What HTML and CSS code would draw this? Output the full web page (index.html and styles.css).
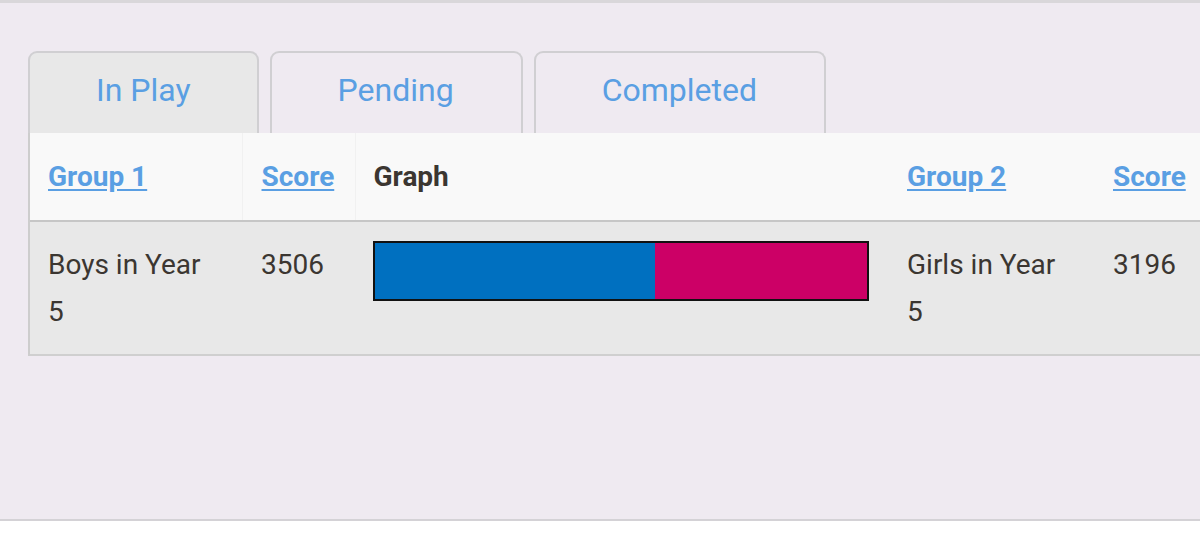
FILE: index.html
```html
<!DOCTYPE html>
<html>
<head>
<meta charset="utf-8">
<link rel="stylesheet" href="styles.css">
</head>
<body>
<div class="page">
  <div class="content">
    <div class="tabs">
      <div class="tab active">In Play</div>
      <div class="tab">Pending</div>
      <div class="tab">Completed</div>
    </div>
    <div class="table-wrap">
      <table class="scores">
        <colgroup>
          <col class="c1"><col class="c2"><col class="c3"><col class="c4"><col class="c5">
        </colgroup>
        <thead>
          <tr>
            <th class="sep"><a href="#">Group 1</a></th>
            <th class="sep"><a href="#">Score</a></th>
            <th class="graph">Graph</th>
            <th><a href="#">Group 2</a></th>
            <th><a href="#">Score</a></th>
          </tr>
        </thead>
        <tbody>
          <tr>
            <td>Boys in Year 5</td>
            <td>3506</td>
            <td class="graph"><div class="bar"><div class="bar-a" style="width:57%"></div><div class="bar-b"></div></div></td>
            <td>Girls in Year 5</td>
            <td>3196</td>
          </tr>
        </tbody>
      </table>
    </div>
  </div>
</div>
</body>
</html>
```
FILE: styles.css
```css
html, body {
  margin: 0;
  padding: 0;
  background: #ffffff;
}
body {
  font-family: Roboto, "Liberation Sans", sans-serif;
  width: 1200px;
  height: 541px;
  overflow: hidden;
}
.page {
  height: 516px;
  background: #efeaf1;
  border-top: 3px solid #d9d7da;
  border-bottom: 2px solid #d4d2d6;
  overflow: hidden;
}
.content {
  padding: 48px 0 0 28px;
}
.tabs {
  display: flex;
  gap: 11px;
  align-items: flex-end;
}
.tab {
  height: 82px;
  box-sizing: border-box;
  padding: 0 67px 6px 66px;
  display: flex;
  align-items: center;
  font-size: 32px;
  color: #5a9fe3;
  border: 2px solid #d0cfd2;
  border-bottom: none;
  border-radius: 9px 9px 0 0;
  background: #efeaf1;
}
.tab.active {
  background: #e8e8e8;
  padding-right: 66px;
}
.table-wrap {
  overflow: hidden;
}
.scores {
  border-collapse: collapse;
  table-layout: fixed;
  width: 1210px;
  font-size: 28px;
  line-height: 47px;
  color: #3b3631;
}
.c1 { width: 213px; }
.c2 { width: 113px; }
.c3 { width: 533px; }
.c4 { width: 206px; }
.c5 { width: 145px; }
.scores thead tr {
  background: #f9f9f9;
  border-bottom: 2px solid #c6c6c6;
}
.scores th {
  height: 88px;
  padding: 0 12px 0 19px;
  text-align: left;
  font-weight: 700;
  vertical-align: middle;
  box-sizing: border-box;
}
.scores th.sep {
  border-right: 1px solid #f1f1f1;
}
.scores th.graph {
  padding-left: 18px;
}
.scores th a {
  color: #5a9fe3;
  text-decoration: underline;
  text-underline-offset: 3px;
}
.scores tbody tr {
  background: #e8e8e8;
  border-bottom: 2px solid #cfcfcf;
}
.scores td {
  padding: 19px 18px 19px 19px;
  vertical-align: top;
}
.scores tbody td:first-child,
.scores thead th:first-child {
  border-left: 2px solid #cdcdcd;
}
.scores tbody td:first-child {
  padding-left: 18px;
  padding-right: 22px;
}
.scores thead th:first-child {
  padding-left: 18px;
}
.bar {
  display: flex;
  width: 492px;
  height: 56px;
  border: 2px solid #111;
  margin-top: 0;
  margin-left: -1px;
}
.bar-a {
  background: #0070c0;
}
.bar-b {
  flex: 1;
  background: #cc0066;
}
```
